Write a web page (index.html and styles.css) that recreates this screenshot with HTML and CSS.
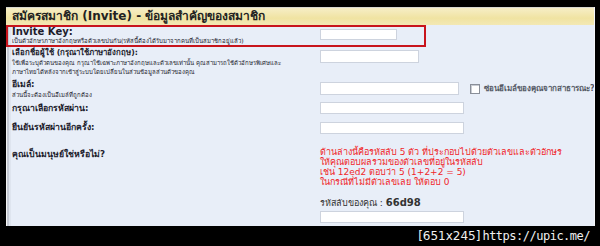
FILE: index.html
```html
<!DOCTYPE html>
<html lang="th">
<head>
<meta charset="utf-8">
<link rel="stylesheet" href="styles.css">
</head>
<body>
<div class="frame">
  <div class="panel">
    <div class="head">สมัครสมาชิก (Invite) - ข้อมูลสำคัญของสมาชิก</div>
    <div class="row invite">
      <div class="cell-l">
        <div class="lbl latin">Invite Key:</div>
        <div class="desc">เป็นตัวอักษรภาษาอังกฤษหรือตัวเลขปนกัน(รหัสนี้ต้องได้รับมาจากคนที่เป็นสมาชิกอยู่แล้ว)</div>
      </div>
      <div class="cell-r"><span class="inp w76"></span></div>
    </div>
    <div class="row user">
      <div class="cell-l">
        <div class="lbl ulbl">เลือกชื่อผู้ใช้ (กรุณาใช้ภาษาอังกฤษ):</div>
        <div class="desc">ใช้เพื่อระบุตัวตนของคุณ กรุณาใช้เฉพาะภาษาอังกฤษและตัวเลขเท่านั้น คุณสามารถใช้ตัวอักษรพิเศษและ</div>
        <div class="desc">ภาษาไทยได้หลังจากเข้าสู่ระบบโดยเปลี่ยนในส่วนข้อมูลส่วนตัวของคุณ</div>
      </div>
      <div class="cell-r"><span class="inp w98"></span></div>
    </div>
    <div class="row email">
      <div class="cell-l">
        <div class="lbl">อีเมล์:</div>
        <div class="desc">ส่วนนี้จะต้องเป็นอีเมล์ที่ถูกต้อง</div>
      </div>
      <div class="cell-r flexr">
        <span class="inp w138"></span>
        <span class="chk"></span>
        <span class="hide">ซ่อนอีเมล์ของคุณจากสาธารณะ?</span>
      </div>
    </div>
    <div class="row pass">
      <div class="cell-l"><div class="lbl">กรุณาเลือกรหัสผ่าน:</div></div>
      <div class="cell-r"><span class="inp w143"></span></div>
    </div>
    <div class="row pass2">
      <div class="cell-l"><div class="lbl">ยืนยันรหัสผ่านอีกครั้ง:</div></div>
      <div class="cell-r"><span class="inp w143"></span></div>
    </div>
    <div class="row captcha">
      <div class="cell-l"><div class="lbl">คุณเป็นมนุษย์ใช่หรือไม่?</div></div>
      <div class="cell-r">
        <div class="red">ด้านล่างนี้คือรหัสลับ 5 ตัว ที่ประกอบไปด้วยตัวเลขและตัวอักษร</div>
        <div class="red">ให้คุณตอบผลรวมของตัวเลขที่อยู่ในรหัสลับ</div>
        <div class="red">เช่น 12ed2 ตอบว่า 5 (1+2+2 = 5)</div>
        <div class="red">ในกรณีที่ไม่มีตัวเลขเลย ให้ตอบ 0</div>
        <div class="code">รหัสลับของคุณ : <b>66d98</b></div>
        <span class="inp w143"></span>
      </div>
    </div>
  </div>
  <div class="foot"><span class="wm1">[651x245]</span><span class="wm2">https://upic.me/</span></div>
</div>
</body>
</html>
```

FILE: styles.css
```css
html, body {
  margin: 0;
  padding: 0;
  background: #000;
}
.frame {
  width: 600px;
  height: 246px;
  box-sizing: border-box;
  padding: 7px 5px 0 6px;
  display: flex;
  flex-direction: column;
  font-family: Tahoma, "DejaVu Sans", "Noto Sans", sans-serif;
  color: #1c1c2c;
}
.panel {
  height: 219px;
  background: #e8eef8;
  box-shadow: inset 1px 0 #f4f4f4, inset 3px 0 #c6cad4, inset 5px 0 #dfe5ef;
  border-right: 1px solid #f4f6fa;
  overflow: hidden;
}
.head {
  height: 17px;
  border-top: 1px solid #d8d8d0;
  background: linear-gradient(#f6eec6, #f0e3a2 60%, #f3e8b4);
  padding-left: 6px;
  font-size: 12px;
  font-weight: bold;
  line-height: 17px;
  color: #222;
  white-space: nowrap;
}
.row {
  display: grid;
  grid-template-columns: 308px auto;
  padding-left: 6px;
}
.lbl {
  font-size: 8.7px;
  font-weight: bold;
  line-height: 11px;
  white-space: nowrap;
}
.lbl.latin { font-size: 10px; }
.lbl.ulbl { font-size: 7.8px; }
.desc {
  font-size: 6px;
  line-height: 9px;
  white-space: nowrap;
}
.inp {
  display: block;
  height: 11px;
  background: #fff;
  border: 1px solid #cdd3de;
  box-sizing: border-box;
}
.w76 { width: 77px; }
.w98 { width: 99px; }
.w138 { width: 139px; }
.w143 { width: 144px; }

.invite {
  width: 420px;
  box-sizing: border-box;
  border: 2px solid #c8141c;
  padding-left: 4px;
  height: 22px;
}
.invite .lbl { line-height: 9px; }
.invite .cell-r { padding-top: 2px; }

.user { height: 30px; }
.user .cell-r { padding-top: 3px; }
.user .inp { height: 13px; }

.email { height: 21px; }
.email .cell-l { padding-top: 2px; }
.email .cell-r { padding-top: 5px; }
.email .inp { height: 13px; }
.flexr { display: flex; align-items: flex-start; }
.chk {
  width: 8px;
  height: 8px;
  margin: 2px 0 0 11px;
  background: #fff;
  border: 1px solid #8a8f99;
  box-shadow: inset 1px 1px #c8ccd4;
}
.hide {
  margin-left: 4px;
  font-size: 8px;
  font-weight: bold;
  line-height: 13px;
  color: #555a66;
  white-space: nowrap;
}

.pass { height: 19px; }
.pass .cell-l { padding-top: 5px; }
.pass .cell-r { padding-top: 4px; }
.pass .inp { height: 12px; }

.pass2 { height: 20px; }
.pass2 .cell-l { padding-top: 5px; }
.pass2 .cell-r { padding-top: 5px; }
.pass2 .inp { height: 12px; }

.captcha { height: 89px; }
.captcha .cell-l { padding-top: 12px; }
.captcha .cell-r { padding-top: 10px; }
.red {
  color: #f0262a;
  font-size: 9px;
  line-height: 10px;
  white-space: nowrap;
}
.code {
  margin-top: 10px;
  font-size: 9px;
  line-height: 11px;
  color: #333;
}
.code b { font-size: 10px; }
.captcha .inp { height: 12px; margin-top: 2px; }

.foot {
  height: 20px;
  display: flex;
  justify-content: flex-end;
  align-items: center;
  padding-right: 5px;
  color: #f0f0f0;
  gap: 2px;
}
.wm1 {
  font-family: "DejaVu Sans", sans-serif;
  font-size: 12px;
}
.wm2 {
  font-family: "DejaVu Sans Mono", monospace;
  font-size: 12px;
  letter-spacing: -0.5px;
}
```
